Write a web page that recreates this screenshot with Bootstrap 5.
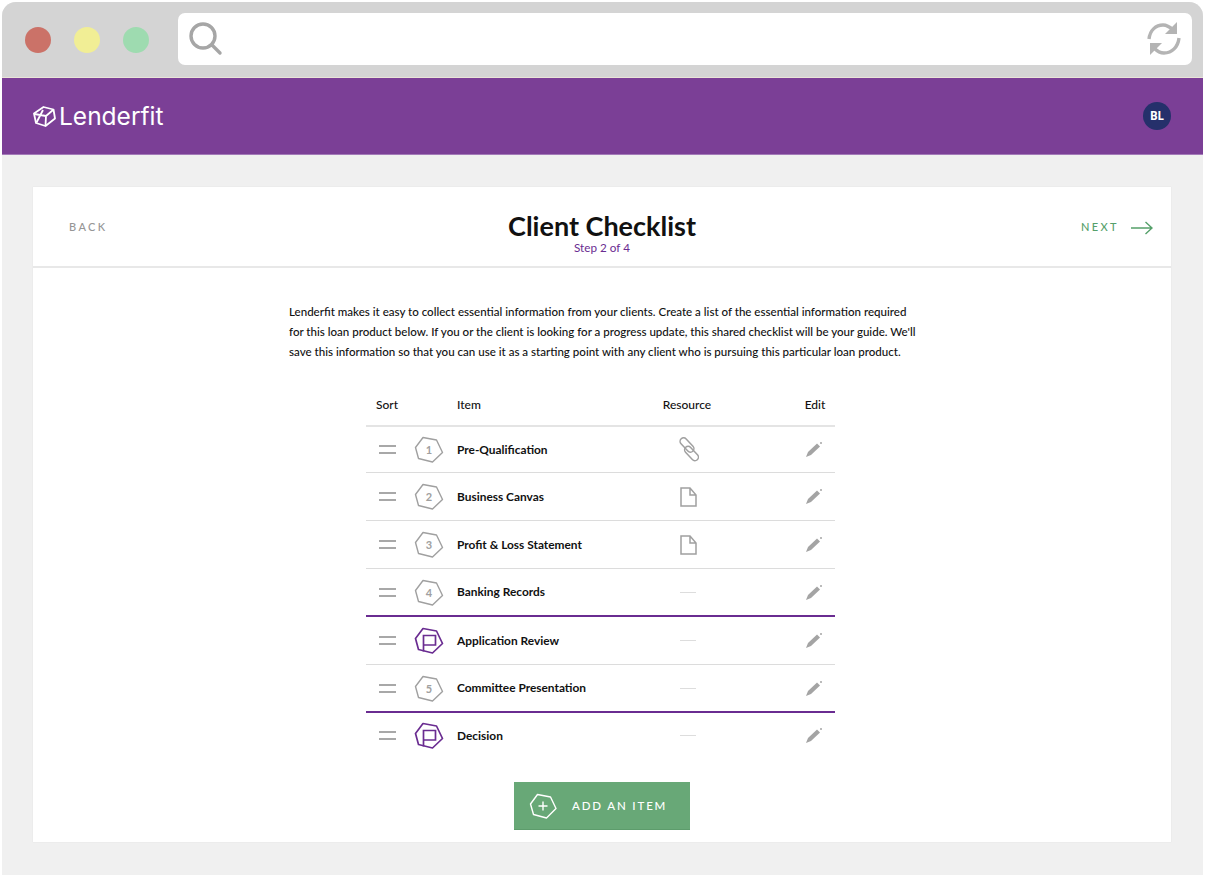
<!doctype html>
<html lang="en">
<head>
<meta charset="utf-8">
<title>Client Checklist</title>
<link href="https://cdn.jsdelivr.net/npm/bootstrap@5.3.0/dist/css/bootstrap.min.css" rel="stylesheet">
<style>
html,body{height:100%;background:#fff;}
body{font-family:"Lato",sans-serif;color:#111;padding:2px 3px 3px 2px;overflow:hidden;}
.frame{height:873px;background:#f0f0f0;border-radius:14px 14px 0 0;overflow:hidden;}
.chrome{height:75px;background:#d4d4d4;padding:11px 11px 0 23px;}
.dot{width:26px;height:26px;border-radius:50%;margin-top:14px;margin-right:23px;flex:none;}
.dot-r{background:#cb7268;}.dot-y{background:#f1ee95;}.dot-g{background:#9edbb0;}
.urlbar{height:52px;background:#fff;border-radius:7px;margin-left:6px;padding:0 11px 0 10px;}
.topbar{height:78px;background:#7b3f96;padding:0 32px 0 31px;border-top:1px solid #e9e4d8;border-bottom:1px solid #a37ab8;}
.brand{color:#fff;font-family:"Inter",sans-serif;font-weight:400;font-size:24.5px;line-height:1;gap:3px;}
.avatar{width:28px;height:28px;border-radius:50%;background:#25306b;color:#fff;font-size:11.5px;font-weight:700;font-family:"Noto Sans",sans-serif;}
.panel{margin:32px 32px 0 31px;height:655px;background:#fff;border:0;border-radius:0;box-shadow:0 0 1px #ddd;}
.panel-top{height:81px;padding:0 18px 0 36px;border-bottom:2px solid #e8e8e8;}
.backlink,.nextlink{font-size:11px;letter-spacing:2.4px;font-weight:500;padding-top:2px;}
.backlink{color:#969696;width:102px;}.nextlink{color:#55a06a;gap:12px;width:120px;}
.ttl{font-size:27px;font-weight:700;line-height:28px;margin:0;color:#111;padding-top:12px;}
.stepline{font-size:11.7px;line-height:14px;color:#6a2c91;}
.intro{width:640px;margin:34px 0 0 249px;padding-left:7px;font-size:11.55px;line-height:20px;color:#111;font-weight:500;}
.checklist{width:469px;margin:23px 0 0 333px;}
.headrow{height:42px;font-size:12px;font-weight:500;border-bottom:2px solid #e4e4e4;}
.itemrow{height:48px;border-bottom:1px solid #dcdcdc;font-size:11.9px;font-weight:700;}
.itemrow.firstrow{height:46px;}
.itemrow.mile{border-bottom:2px solid #6a2c91;}
.itemrow.lastrow{border-bottom:0;padding-bottom:3px;}
.c-sort{width:48px;flex:none;padding-left:10px;}
.c-grip{width:48px;flex:none;padding-left:13px;}
.c-hex{width:43px;flex:none;}
.c-item{width:189px;flex:none;}
.c-res{width:82px;flex:none;text-align:center;}
.itemrow .c-res{padding-left:2px;}
.c-edit{flex:1;text-align:center;padding-left:67px;}
.penico{margin-right:2px;}
.grip{display:block;width:17px;height:9px;border-top:2px solid #a8a8a8;border-bottom:2px solid #a8a8a8;}
.hexnum{position:relative;width:30px;height:27px;display:block;}
.hexnum span{position:absolute;inset:0;text-align:center;line-height:27px;font-size:11px;color:#a0a0a0;font-weight:700;}
.dash{display:block;width:16px;height:1px;background:#ddd;margin:0 auto;}
.addbtn{width:176px;height:48px;background:#68a877;color:#fff;border:0;border-bottom:1px solid #5d9c6c;border-radius:0;margin:21px 0 0 481px;font-size:11.5px;font-weight:500;letter-spacing:1.85px;gap:15px;padding:0 0 0 15px;}
</style>
</head>
<body>
<div class="frame d-flex flex-column">
  <div class="chrome d-flex">
    <span class="dot dot-r"></span><span class="dot dot-y"></span><span class="dot dot-g"></span>
    <div class="urlbar flex-grow-1 d-flex align-items-center justify-content-between">
      <svg width="36" height="36" viewBox="0 0 36 36" fill="none" stroke="#a6a6a6" stroke-width="3.4" stroke-linecap="round"><circle cx="15" cy="15" r="12"/><path d="M24 24l8 8"/></svg>
      <svg width="34" height="34" viewBox="0 0 34 34" fill="none"><path d="M2 17C3 8 9 3 16 3c4 0 7 2 10 5" stroke="#b4b4b4" stroke-width="3.400"/><path d="M30 0v12H18z" fill="#b4b4b4"/><path d="M32 16c-1 9-7 15-15 15-4 0-7-2-10-5" stroke="#b4b4b4" stroke-width="3.400"/><path d="M3 33V21h12z" fill="#b4b4b4"/></svg>
    </div>
  </div>
  <div class="topbar d-flex align-items-center justify-content-between">
    <div class="brand d-flex align-items-center">
      <svg width="23" height="21" viewBox="0 0 23 21" fill="none" stroke="#fff" stroke-width="1.800" stroke-linejoin="round"><path d="M10.500 1l10 2.500 1.500 9L12.500 20l-9.500-3L1 7.500z"/><path d="M1.500 8L13 10l7-6M13 10l-.500 9.500M3.500 16.500L10 4"/></svg>
      <span>Lenderfit</span>
    </div>
    <span class="avatar d-flex align-items-center justify-content-center">BL</span>
  </div>
  <div class="card panel">
    <div class="panel-top d-flex align-items-center justify-content-between">
      <span class="backlink text-uppercase">Back</span>
      <div class="text-center">
        <h1 class="ttl">Client Checklist</h1>
        <div class="stepline">Step 2 of 4</div>
      </div>
      <span class="nextlink text-uppercase d-flex align-items-center justify-content-end">Next
        <svg width="22" height="14" viewBox="0 0 22 14" fill="none" stroke="#55a06a" stroke-width="1.400"><path d="M0 7h21M14.500 1L21 7l-6.500 6"/></svg>
      </span>
    </div>
    <p class="intro">Lenderfit makes it easy to collect essential information from your clients. Create a list of the essential information required<br>for this loan product below. If you or the client is looking for a progress update, this shared checklist will be your guide. We'll<br>save this information so that you can use it as a starting point with any client who is pursuing this particular loan product.</p>
    <div class="checklist">
      <svg width="0" height="0" class="position-absolute">
        <defs>
          <symbol id="hx" viewBox="0 0 30 27"><path d="M9 1.500l13.500 2.500 6 12.500-10 9.500-14-3.500L1.500 11.500z" fill="none" stroke="#a0a0a0" stroke-width="1.400" stroke-linejoin="round"/></symbol>
          <symbol id="fl" viewBox="0 0 30 27"><path d="M9 1.500l13.500 2.500 6 12.500-10 9.500-14-3.500L1.500 11.500z" fill="none" stroke="#6a2c91" stroke-width="1.700" stroke-linejoin="round"/><path d="M9.500 24.500V8.500H21.500V18H9.500" fill="none" stroke="#6a2c91" stroke-width="1.700"/></symbol>
          <symbol id="pen" viewBox="0 0 16 16"><path d="M0 15l2-5L11 1.500l3 3-9 8.500z" fill="#a4a4a4"/><circle cx="15" cy="1" r="1" fill="#a4a4a4"/></symbol>
          <symbol id="doc" viewBox="0 0 17 20"><path d="M1 1h9l6 7v11H1zM10 1v7h6" fill="none" stroke="#a0a0a0" stroke-width="1.500"/></symbol>
        </defs>
      </svg>
      <div class="headrow d-flex align-items-center">
        <span class="c-sort">Sort</span><span class="c-hex"></span><span class="c-item">Item</span><span class="c-res">Resource</span><span class="c-edit">Edit</span>
      </div>
      <div class="itemrow firstrow d-flex align-items-center">
        <span class="c-grip"><i class="grip"></i></span>
        <span class="c-hex"><span class="hexnum"><svg width="30" height="27"><use href="#hx"/></svg><span>1</span></span></span>
        <span class="c-item">Pre-Qualification</span>
        <span class="c-res"><svg width="21" height="25" viewBox="0 0 21 25" fill="none" stroke="#a0a0a0" stroke-width="1.500"><rect x="0.500" y="4.500" width="17" height="7" rx="3.500" transform="rotate(47 9 8)"/><rect x="5" y="13" width="17" height="7" rx="3.500" transform="rotate(47 13.500 16.500)"/></svg></span>
        <span class="c-edit"><svg class="penico" width="16" height="16"><use href="#pen"/></svg></span>
      </div>
      <div class="itemrow d-flex align-items-center">
        <span class="c-grip"><i class="grip"></i></span>
        <span class="c-hex"><span class="hexnum"><svg width="30" height="27"><use href="#hx"/></svg><span>2</span></span></span>
        <span class="c-item">Business Canvas</span>
        <span class="c-res"><svg width="17" height="20"><use href="#doc"/></svg></span>
        <span class="c-edit"><svg class="penico" width="16" height="16"><use href="#pen"/></svg></span>
      </div>
      <div class="itemrow d-flex align-items-center">
        <span class="c-grip"><i class="grip"></i></span>
        <span class="c-hex"><span class="hexnum"><svg width="30" height="27"><use href="#hx"/></svg><span>3</span></span></span>
        <span class="c-item">Profit &amp; Loss Statement</span>
        <span class="c-res"><svg width="17" height="20"><use href="#doc"/></svg></span>
        <span class="c-edit"><svg class="penico" width="16" height="16"><use href="#pen"/></svg></span>
      </div>
      <div class="itemrow mile d-flex align-items-center">
        <span class="c-grip"><i class="grip"></i></span>
        <span class="c-hex"><span class="hexnum"><svg width="30" height="27"><use href="#hx"/></svg><span>4</span></span></span>
        <span class="c-item">Banking Records</span>
        <span class="c-res"><i class="dash"></i></span>
        <span class="c-edit"><svg class="penico" width="16" height="16"><use href="#pen"/></svg></span>
      </div>
      <div class="itemrow d-flex align-items-center">
        <span class="c-grip"><i class="grip"></i></span>
        <span class="c-hex"><span class="hexnum"><svg width="30" height="27"><use href="#fl"/></svg></span></span>
        <span class="c-item">Application Review</span>
        <span class="c-res"><i class="dash"></i></span>
        <span class="c-edit"><svg class="penico" width="16" height="16"><use href="#pen"/></svg></span>
      </div>
      <div class="itemrow mile d-flex align-items-center">
        <span class="c-grip"><i class="grip"></i></span>
        <span class="c-hex"><span class="hexnum"><svg width="30" height="27"><use href="#hx"/></svg><span>5</span></span></span>
        <span class="c-item">Committee Presentation</span>
        <span class="c-res"><i class="dash"></i></span>
        <span class="c-edit"><svg class="penico" width="16" height="16"><use href="#pen"/></svg></span>
      </div>
      <div class="itemrow lastrow d-flex align-items-center">
        <span class="c-grip"><i class="grip"></i></span>
        <span class="c-hex"><span class="hexnum"><svg width="30" height="27"><use href="#fl"/></svg></span></span>
        <span class="c-item">Decision</span>
        <span class="c-res"><i class="dash"></i></span>
        <span class="c-edit"><svg class="penico" width="16" height="16"><use href="#pen"/></svg></span>
      </div>
    </div>
    <button type="button" class="btn addbtn d-flex align-items-center text-uppercase">
      <svg width="28" height="26" viewBox="0 0 28 26" fill="none" stroke="#fff" stroke-width="1.400" stroke-linejoin="round"><path d="M8.500 1.500l13 2.500 5.500 11.500-9.500 9.500-13-3.500L1.500 11z"/><path d="M14 8.500v9M9.500 13h9"/></svg>
      Add an item
    </button>
  </div>
</div>
<script src="https://cdn.jsdelivr.net/npm/bootstrap@5.3.0/dist/js/bootstrap.bundle.min.js"></script>
</body>
</html>
